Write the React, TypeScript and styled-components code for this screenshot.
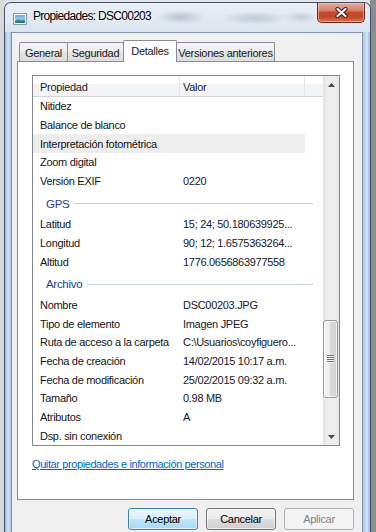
import React from "react";
import styled, { createGlobalStyle, css } from "styled-components";

type Prop = { name: string; value?: string; selected?: boolean };
type Group = { id: number; title?: string; rows: Prop[] };

const groups: Group[] = [
  {
    id: 1,
    rows: [
      { name: "Nitidez" },
      { name: "Balance de blanco" },
      { name: "Interpretación fotométrica", selected: true },
      { name: "Zoom digital" },
      { name: "Versión EXIF", value: "0220" },
    ],
  },
  {
    id: 2,
    title: "GPS",
    rows: [
      { name: "Latitud", value: "15; 24; 50.180639925..." },
      { name: "Longitud", value: "90; 12; 1.6575363264..." },
      { name: "Altitud", value: "1776.0656863977558" },
    ],
  },
  {
    id: 3,
    title: "Archivo",
    rows: [
      { name: "Nombre", value: "DSC00203.JPG" },
      { name: "Tipo de elemento", value: "Imagen JPEG" },
      { name: "Ruta de acceso a la carpeta", value: "C:\\Usuarios\\coyfiguero..." },
      { name: "Fecha de creación", value: "14/02/2015 10:17 a.m." },
      { name: "Fecha de modificación", value: "25/02/2015 09:32 a.m." },
      { name: "Tamaño", value: "0.98 MB" },
      { name: "Atributos", value: "A" },
      { name: "Dsp. sin conexión" },
    ],
  },
];

const tabs = [
  { id: 1, label: "General", width: 49 },
  { id: 2, label: "Seguridad", width: 57 },
  { id: 3, label: "Detalles", width: 54, active: true },
  { id: 4, label: "Versiones anteriores", width: 99 },
];

const App: React.FC = () => {
  return (
    <Screen>
      <GlobalStyle />
      <Window>
        <TitleBar>
          <AppIcon width="16" height="16" viewBox="0 0 16 16">
            <rect x="1.5" y="2.5" width="13" height="11" fill="#fff" stroke="#8a97a6" />
            <defs>
              <linearGradient id="sky" x1="0" y1="0" x2="0" y2="1">
                <stop offset="0" stopColor="#6fa9df" />
                <stop offset="1" stopColor="#cfe6f7" />
              </linearGradient>
            </defs>
            <rect x="3" y="4" width="10" height="8" fill="url(#sky)" />
            <path d="M3 12 L3 9.5 Q6 7.5 9 9 Q11 8 13 9 L13 12 Z" fill="#3f9a8c" />
            <path d="M3 12 L3 10.8 Q7 9.6 13 10.6 L13 12 Z" fill="#2c7566" />
          </AppIcon>
          <Title>Propiedades: DSC00203</Title>
          <CloseButton>
            <svg width="13" height="11" viewBox="0 0 13 11">
              <path d="M2.5 2 L10.5 9 M10.5 2 L2.5 9" stroke="#4a1c12" strokeWidth="4.2" strokeLinecap="round" />
              <path d="M2.5 2 L10.5 9 M10.5 2 L2.5 9" stroke="#fff" strokeWidth="2.2" strokeLinecap="round" />
            </svg>
          </CloseButton>
        </TitleBar>

        <Client>
          <TabStrip>
            {tabs.map((t) => (
              <Tab key={t.id} $active={!!t.active} $w={t.width}>
                {t.label}
              </Tab>
            ))}
          </TabStrip>

          <Panel>
            <ListView>
              <ListBody>
                <HeaderRow>
                  <HeaderCell $w={147} $pad={7}>Propiedad</HeaderCell>
                  <HeaderCell $w={125} $pad={3}>Valor</HeaderCell>
                  <HeaderFill />
                </HeaderRow>
                {groups.map((g) => (
                  <React.Fragment key={g.id}>
                    {g.title && (
                      <GroupRow>
                        <GroupTitle>{g.title}</GroupTitle>
                        <GroupLine />
                      </GroupRow>
                    )}
                    {g.rows.map((r) => (
                      <Row key={r.name} $selected={!!r.selected}>
                        <NameCell>{r.name}</NameCell>
                        <ValueCell>{r.value}</ValueCell>
                      </Row>
                    ))}
                  </React.Fragment>
                ))}
              </ListBody>
              <ScrollBar>
                <ScrollArrow>
                  <svg width="7" height="4" viewBox="0 0 7 4">
                    <path d="M0 4 L3.5 0 L7 4 Z" fill="#4b4b4b" />
                  </svg>
                </ScrollArrow>
                <Track>
                  <Thumb>
                    <Grip />
                  </Thumb>
                </Track>
                <ScrollArrow>
                  <svg width="7" height="4" viewBox="0 0 7 4">
                    <path d="M0 0 L7 0 L3.5 4 Z" fill="#4b4b4b" />
                  </svg>
                </ScrollArrow>
              </ScrollBar>
            </ListView>
            <PanelLink href="#">Quitar propiedades e información personal</PanelLink>
          </Panel>

          <ButtonRow>
            <DialogButton $variant="default">Aceptar</DialogButton>
            <DialogButton $variant="normal">Cancelar</DialogButton>
            <DialogButton $variant="disabled">Aplicar</DialogButton>
          </ButtonRow>
        </Client>
      </Window>
    </Screen>
  );
};

const GlobalStyle = createGlobalStyle`
  html, body {
    margin: 0;
    padding: 0;
  }
  body {
    background: #d6d6d6;
    font-family: "Liberation Sans", Arial, sans-serif;
    font-size: 11px;
    letter-spacing: -0.3px;
    color: #1b1b1b;
  }
  * {
    box-sizing: border-box;
  }
`;

const Screen = styled.div`
  width: 376px;
  height: 532px;
  overflow: hidden;
  padding: 2px 0 0 4px;
  background: linear-gradient(to right, #d9d9d9 0 4px, #e4e4e4 4px 370px, #8c8c8c 370px);
`;

const Window = styled.div`
  width: 367px;
  height: 540px;
  display: flex;
  flex-direction: column;
  border: 1px solid rgba(38, 52, 70, 0.8);
  border-bottom: none;
  border-radius: 7px 7px 0 0;
  overflow: hidden;
  background:
    linear-gradient(to right, #93b5dc, #d4e6f8 3px, #a7c5e7 6px) left top / 6px 100% no-repeat,
    linear-gradient(to right, #a7c5e7, #d4e6f8 4px, #93b5dc 7px) right top / 7px 100% no-repeat,
    #c3d8ee;
`;

const TitleBar = styled.div`
  height: 29px;
  flex-shrink: 0;
  display: flex;
  align-items: flex-start;
  padding-left: 7px;
  background:
    radial-gradient(ellipse 24px 7px at 176px 14px, rgba(95, 105, 120, 0.3), transparent),
    radial-gradient(ellipse 34px 7px at 250px 15px, rgba(95, 105, 120, 0.25), transparent),
    radial-gradient(ellipse 18px 6px at 296px 14px, rgba(95, 105, 120, 0.22), transparent),
    linear-gradient(#e8eef5, #dbe5f0);
`;

const AppIcon = styled.svg`
  margin-top: 8px;
  flex-shrink: 0;
`;

const Title = styled.div`
  margin: 6px 0 0 5px;
  font-size: 12px;
  line-height: 14px;
  letter-spacing: -0.7px;
  color: #000;
  text-shadow: 0 0 6px rgba(255, 255, 255, 0.9);
`;

const CloseButton = styled.div`
  margin-left: auto;
  margin-right: 5px;
  width: 48px;
  height: 20px;
  display: flex;
  align-items: center;
  justify-content: center;
  border: 1px solid #6e2a1c;
  border-top: none;
  border-radius: 0 0 5px 5px;
  background: linear-gradient(#e9a99a, #d7806b 40%, #c24a2e 50%, #c14a2c 75%, #d9754f);
  box-shadow: inset 0 0 0 1px rgba(255, 220, 210, 0.45);
`;

const Client = styled.div`
  flex: 1;
  margin: 0 7px 0 6px;
  display: flex;
  flex-direction: column;
  padding: 7px 8px 0 5px;
  border: 1px solid #8293ab;
  background: #f0f0f0;
`;

const TabStrip = styled.div`
  height: 21px;
  display: flex;
  align-items: flex-end;
  padding-left: 2px;
`;

const Tab = styled.div<{ $active: boolean; $w: number }>`
  width: ${(p) => p.$w}px;
  margin-left: -1px;
  display: flex;
  align-items: center;
  justify-content: center;
  white-space: nowrap;
  border: 1px solid #898c95;
  border-bottom: none;
  border-radius: 2px 2px 0 0;
  &:first-child {
    margin-left: 0;
  }
  ${(p) =>
    p.$active
      ? css`
          position: relative;
          z-index: 1;
          height: 22px;
          margin-bottom: -1px;
          background: #fff;
          padding-bottom: 1px;
        `
      : css`
          height: 19px;
          padding-top: 1px;
          background: linear-gradient(#f5f5f5, #ededed 50%, #e4e4e4 50%, #dddddd);
        `}
`;

const Panel = styled.div`
  height: 439px;
  display: flex;
  flex-direction: column;
  padding: 13px 13px 0 14px;
  border: 1px solid #898c95;
  background: #fff;
`;

const ListView = styled.div`
  height: 371px;
  display: flex;
  border: 1px solid #828790;
  background: #fff;
`;

const ListBody = styled.div`
  flex: 1;
  overflow: hidden;
`;

const HeaderRow = styled.div`
  height: 21px;
  display: flex;
  border-bottom: 1px solid #d5d5d5;
  background: linear-gradient(#ffffff 0 42%, #f3f4f6 42%);
`;

const HeaderCell = styled.div<{ $w: number; $pad: number }>`
  width: ${(p) => p.$w}px;
  padding: 2px 0 0 ${(p) => p.$pad}px;
  display: flex;
  align-items: center;
  border-right: 1px solid #e3e5e9;
  color: #1e1e2a;
`;

const HeaderFill = styled.div`
  flex: 1;
`;

const Row = styled.div<{ $selected: boolean }>`
  width: 272px;
  height: 18.7px;
  display: flex;
  align-items: center;
  white-space: nowrap;
  background: ${(p) => (p.$selected ? "#ededed" : "transparent")};
`;

const NameCell = styled.div`
  width: 147px;
  padding-left: 7px;
  flex-shrink: 0;
  color: #141414;
`;

const ValueCell = styled.div`
  padding-left: 3px;
  color: #16172e;
`;

const GroupRow = styled.div`
  height: 24.5px;
  display: flex;
  align-items: center;
  padding: 2px 10px 0 13px;
`;

const GroupTitle = styled.div`
  font-size: 11.5px;
  color: #1f3a93;
  margin-right: 5px;
`;

const GroupLine = styled.div`
  flex: 1;
  height: 1px;
  background: #c3d1ea;
`;

const ScrollBar = styled.div`
  width: 16px;
  display: flex;
  flex-direction: column;
  background: linear-gradient(to right, #e2e2e2, #eeeeee 30%, #eeeeee 75%, #e6e6e6);
`;

const ScrollArrow = styled.div`
  height: 17px;
  display: flex;
  align-items: center;
  justify-content: center;
`;

const Track = styled.div`
  flex: 1;
  padding-top: 227px;
`;

const Thumb = styled.div`
  height: 78px;
  margin-right: 1px;
  display: flex;
  align-items: center;
  justify-content: center;
  border: 1px solid #979797;
  border-radius: 3px;
  background: linear-gradient(to right, #f4f4f4, #ebebeb 50%, #d9d9d9 50%, #d2d2d2);
  box-shadow: inset 0 0 0 1px rgba(255, 255, 255, 0.7);
`;

const Grip = styled.div`
  width: 7px;
  height: 8px;
  background: repeating-linear-gradient(#6e6e6e 0 1px, #f6f6f6 1px 2px);
`;

const PanelLink = styled.a`
  align-self: flex-start;
  margin-top: 11px;
  line-height: 14px;
  color: #0066cc;
  text-decoration: underline;
  letter-spacing: -0.4px;
`;

const ButtonRow = styled.div`
  margin-top: 8px;
  display: flex;
  justify-content: flex-end;
  gap: 8px;
`;

const DialogButton = styled.div<{ $variant: "default" | "normal" | "disabled" }>`
  width: 70px;
  height: 22px;
  display: flex;
  align-items: center;
  justify-content: center;
  border-radius: 3px;
  ${(p) =>
    p.$variant === "default"
      ? css`
          border: 1px solid #3c7fb1;
          background: linear-gradient(#eaf6fd, #d9f0fc 50%, #bee6fd 50%, #a7d9f5);
          box-shadow: inset 0 0 0 1px rgba(255, 255, 255, 0.6);
          color: #000;
        `
      : p.$variant === "normal"
      ? css`
          border: 1px solid #707070;
          background: linear-gradient(#f2f2f2, #ebebeb 50%, #dddddd 50%, #cfcfcf);
          box-shadow: inset 0 0 0 1px rgba(255, 255, 255, 0.7);
          color: #000;
        `
      : css`
          border: 1px solid #adb2b5;
          background: #f4f4f4;
          color: #838383;
        `}
`;

export default App;
